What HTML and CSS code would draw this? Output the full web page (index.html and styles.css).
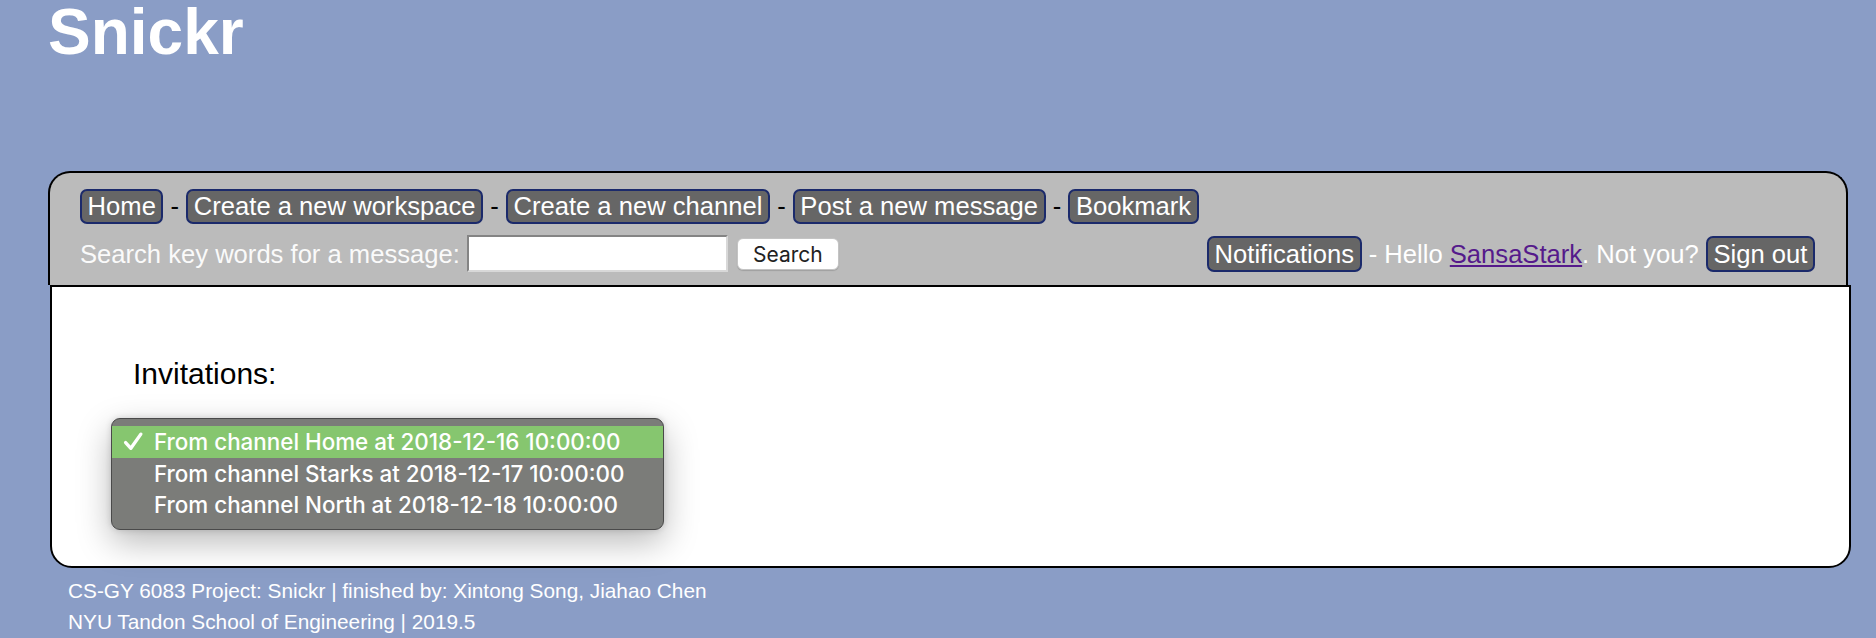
FILE: index.html
```html
<!DOCTYPE html>
<html>
<head>
<meta charset="utf-8">
<title>Snickr</title>
<link rel="stylesheet" href="styles.css">
</head>
<body>
<h1 class="title">Snickr</h1>
<div class="frame">
  <div class="topbar">
    <div class="navrow">
      <a class="btn" href="#">Home</a><span class="sep">&nbsp;-&nbsp;</span><a class="btn" href="#">Create a new workspace</a><span class="sep">&nbsp;-&nbsp;</span><a class="btn" href="#">Create a new channel</a><span class="sep">&nbsp;-&nbsp;</span><a class="btn" href="#">Post a new message</a><span class="sep">&nbsp;-&nbsp;</span><a class="btn" href="#">Bookmark</a>
    </div>
    <div class="subrow">
      <form class="search">
        <span class="label">Search key words for a message:&nbsp;</span><input class="search-input" type="text"><button class="search-btn" type="button">Search</button>
      </form>
      <div class="user">
        <a class="btn" href="#">Notifications</a><span class="hello">&nbsp;- Hello <a class="userlink" href="#">SansaStark</a>. Not you?&nbsp;</span><a class="btn" href="#">Sign out</a>
      </div>
    </div>
  </div>
  <div class="content">
    <div class="heading">Invitations:</div>
    <div class="menu">
      <div class="item selected"><svg class="check" viewBox="0 0 20 20" width="21" height="21"><polyline points="2.5,11 7.5,16.5 17,3" fill="none" stroke="#fff" stroke-width="3.2" stroke-linecap="round" stroke-linejoin="round"/></svg><span>From channel Home at 2018-12-16 10:00:00</span></div>
      <div class="item"><span>From channel Starks at 2018-12-17 10:00:00</span></div>
      <div class="item"><span>From channel North at 2018-12-18 10:00:00</span></div>
    </div>
  </div>
  <div class="footer">
    <div>CS-GY 6083 Project: Snickr | finished by: Xintong Song, Jiahao Chen</div>
    <div>NYU Tandon School of Engineering | 2019.5</div>
  </div>
</div>
</body>
</html>
```
FILE: styles.css
```css
html, body {
  margin: 0;
  padding: 0;
}
body {
  background: #8a9dc6;
  font-family: "Liberation Sans", Arial, Helvetica, sans-serif;
  color: #000;
  overflow: hidden;
}
.title {
  margin: 0 0 0 48px;
  padding-top: 1px;
  font-size: 64px;
  line-height: 62px;
  font-weight: bold;
  color: #fff;
}
.frame {
  margin: 108px 28px 0 48px;
}
.topbar {
  background: #bbbbbb;
  border: 2px solid #000;
  border-bottom: none;
  border-radius: 22px 22px 0 0;
  padding: 16px 31px 13px 30px;
}
.navrow {
  display: flex;
  align-items: center;
  height: 35px;
}
.btn {
  display: inline-block;
  box-sizing: border-box;
  height: 35px;
  line-height: 31px;
  padding: 0 5.6px;
  font-size: 25.6px;
  color: #fff;
  background: #666666;
  border: 2px solid #1b2a6b;
  border-radius: 7px;
  text-decoration: none;
  white-space: nowrap;
}
.subrow .btn {
  height: 36px;
  line-height: 32px;
}
.sep {
  font-size: 25.6px;
  color: #000;
}
.subrow {
  display: flex;
  justify-content: space-between;
  align-items: center;
  margin-top: 12px;
  height: 36px;
}
.search {
  display: flex;
  align-items: center;
  margin: 0;
}
.label {
  font-size: 25.6px;
  color: #fafafa;
  white-space: nowrap;
}
.search-input {
  box-sizing: border-box;
  width: 261px;
  height: 37px;
  margin: -1px 0 0 0;
  border: 2px inset #d8d8d8;
  background: #fff;
  padding: 0;
}
.search-btn {
  box-sizing: border-box;
  margin-left: 9px;
  width: 102px;
  height: 32px;
  background: #fff;
  border: 1px solid #c4c4c4;
  border-radius: 6px;
  box-shadow: 0 1px 1px rgba(0,0,0,0.15);
  font-family: Inter, "Liberation Sans", sans-serif;
  font-size: 21px;
  color: #222;
  padding: 0;
}
.user {
  display: flex;
  align-items: center;
}
.hello {
  font-size: 25.6px;
  color: #fff;
  white-space: nowrap;
}
.userlink {
  color: #551a8b;
  text-decoration: underline;
}
.content {
  background: #fff;
  border: 2px solid #000;
  border-radius: 0 0 22px 22px;
  margin: 0 -3px 0 2px;
  padding: 70px 0 0 81px;
  box-sizing: border-box;
  height: 283px;
}
.heading {
  font-size: 30px;
  line-height: 34px;
  color: #000;
}
.menu {
  margin: 27px 0 0 -22px;
  width: 553px;
  box-sizing: border-box;
  background: #7b7c79;
  border: 1px solid #4a4a4a;
  border-radius: 9px;
  padding: 7px 0 8px 0;
  box-shadow: 0 12px 34px rgba(0,0,0,0.28), 0 0 6px rgba(0,0,0,0.15);
}
.item {
  display: flex;
  align-items: center;
  height: 31.5px;
  padding-left: 42px;
  position: relative;
  font-family: Inter, "Liberation Sans", sans-serif;
  font-weight: 500;
  font-size: 22.4px;
  color: #fff;
  white-space: nowrap;
}
.item.selected {
  background: #86c66f;
}
.check {
  position: absolute;
  left: 11px;
  top: 5px;
}
.footer {
  margin-top: 7px;
  padding-left: 20px;
  font-size: 20.8px;
  line-height: 31px;
  color: #fff;
}
```
